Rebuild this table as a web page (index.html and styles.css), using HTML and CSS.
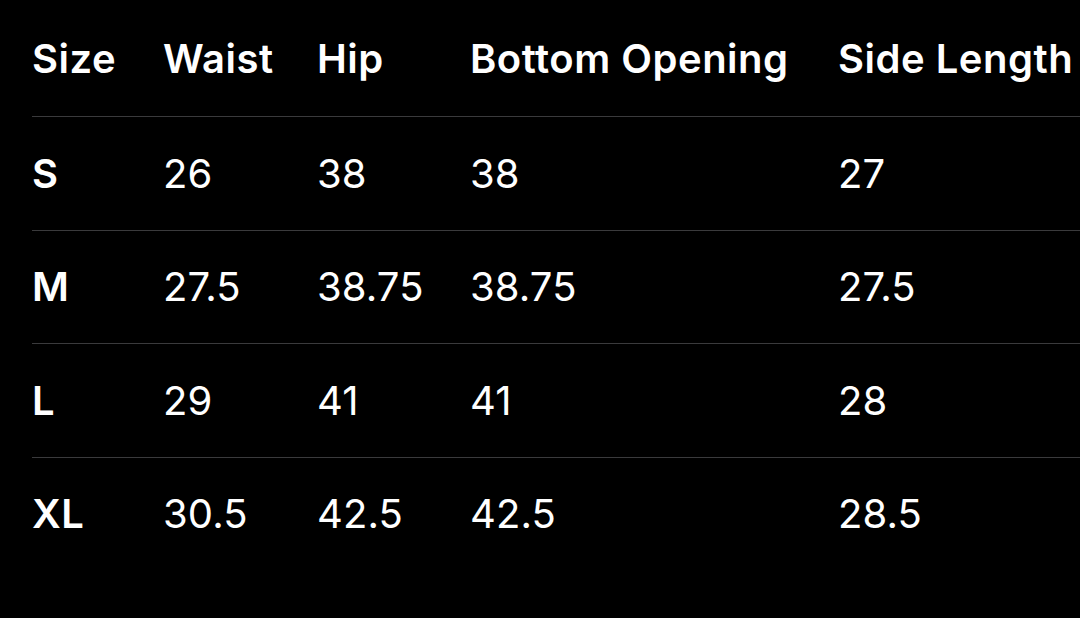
FILE: index.html
```html
<!DOCTYPE html>
<html lang="en">
<head>
<meta charset="utf-8">
<title>Size Chart</title>
<link rel="stylesheet" href="styles.css">
</head>
<body>
<div class="chart">
  <div class="row head">
    <div>Size</div><div>Waist</div><div>Hip</div><div>Bottom Opening</div><div>Side Length</div>
  </div>
  <div class="row">
    <div class="size">S</div><div>26</div><div>38</div><div>38</div><div>27</div>
  </div>
  <div class="row">
    <div class="size">M</div><div>27.5</div><div>38.75</div><div>38.75</div><div>27.5</div>
  </div>
  <div class="row">
    <div class="size">L</div><div>29</div><div>41</div><div>41</div><div>28</div>
  </div>
  <div class="row last">
    <div class="size">XL</div><div>30.5</div><div>42.5</div><div>42.5</div><div>28.5</div>
  </div>
</div>
</body>
</html>
```
FILE: styles.css
```css
html, body {
  margin: 0;
  padding: 0;
  background: #000;
  height: 100%;
}
body {
  font-family: Inter, "Noto Sans", "Liberation Sans", sans-serif;
  color: #fff;
  font-size: 40px;
  overflow: hidden;
}
.chart {
  margin-left: 32px;
  display: flex;
  flex-direction: column;
}
.row {
  display: grid;
  grid-template-columns: 131px 154px 153px 368px 1fr;
  align-items: center;
  height: 112.5px;
  border-bottom: 1px solid #3a3a3c;
  white-space: nowrap;
  letter-spacing: 0.1px;
}
.row.head {
  height: 116px;
  font-weight: 600;
  letter-spacing: 0.5px;
}
.row.last {
  border-bottom: none;
}
.size {
  font-weight: 600;
  letter-spacing: 0.5px;
}
```
